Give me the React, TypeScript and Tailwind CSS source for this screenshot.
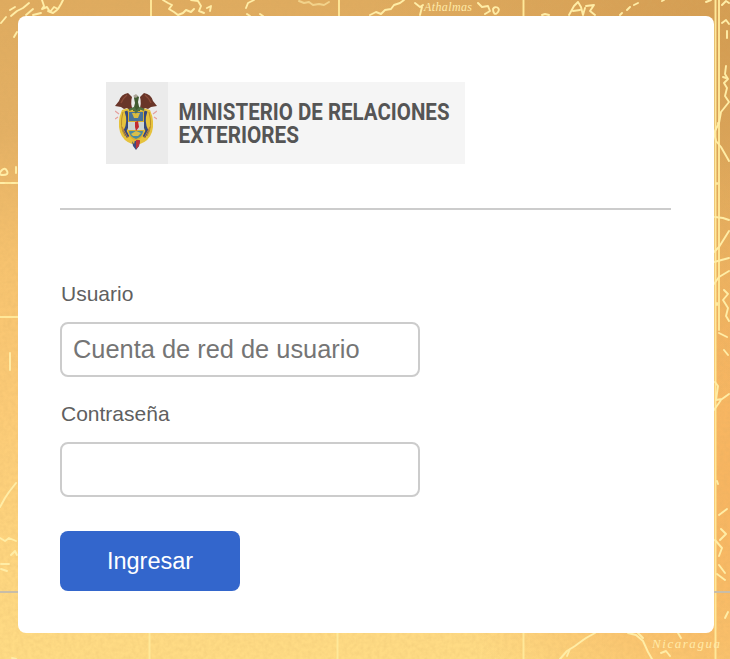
import React from 'react';

const MapBackground = () => (
  <svg className="absolute inset-0 h-full w-full" viewBox="0 0 730 659" fill="none" aria-hidden="true">
    <defs>
      <linearGradient id="paper" x1="0" y1="0" x2="0" y2="1">
        <stop offset="0" stopColor="#dfab5f" />
        <stop offset="0.2" stopColor="#e4b064" />
        <stop offset="0.4" stopColor="#f7c36f" />
        <stop offset="0.62" stopColor="#fccb77" />
        <stop offset="1" stopColor="#ffdc85" />
      </linearGradient>
      <radialGradient id="shade" gradientUnits="userSpaceOnUse" cx="760" cy="480" r="330">
        <stop offset="0" stopColor="#f6b05c" stopOpacity="0.9" />
        <stop offset="0.5" stopColor="#f6b05c" stopOpacity="0.65" />
        <stop offset="1" stopColor="#f6b05c" stopOpacity="0" />
      </radialGradient>
      <radialGradient id="shadeTop" gradientUnits="userSpaceOnUse" cx="730" cy="40" r="360">
        <stop offset="0" stopColor="#cf964c" stopOpacity="0.7" />
        <stop offset="1" stopColor="#cf964c" stopOpacity="0" />
      </radialGradient>
      <filter id="grain" x="0" y="0" width="100%" height="100%">
        <feTurbulence type="fractalNoise" baseFrequency="0.25" numOctaves="3" seed="4" />
        <feColorMatrix values="0 0 0 0 0.65  0 0 0 0 0.4  0 0 0 0 0.12  0.7 0 0 0 -0.22" />
      </filter>
      <filter id="ink" filterUnits="userSpaceOnUse" x="0" y="0" width="730" height="659">
        <feGaussianBlur stdDeviation="0.6" />
      </filter>
    </defs>
    <rect width="730" height="659" fill="url(#paper)" />
    <rect width="730" height="659" fill="url(#shade)" />
    <rect width="730" height="659" fill="url(#shadeTop)" />
    <rect width="730" height="659" filter="url(#grain)" opacity="0.45" />

    <g stroke="#ffeda6" strokeWidth="1.9" strokeLinecap="round" strokeLinejoin="round" filter="url(#ink)">
      {/* Meridians and parallels */}
      <path d="M151 0V17M339 0V17M523.500 0V17M715.500 0V659M719 0V330M149.500 633V659M337.500 633V659M523.500 633V659M0 183H18M0 317H18" stroke="#ffe899" />
      {/* Top coastline */}
      <path d="M1 23l5-6M10 10l5-3M11 16l6-5 6-3 6-5M14 37l3-5M26 15l7-6M33 15l8-2" />
      <path d="M42 0l2 6-2 3 5-2 3 5 4-5 4 2 3-5 2-4M48 11l5 2 4-3" />
      <path d="M163 0l5 3 4 2-3 4 5 3 4 3 5-2 3-3 5 2 3-3M191 0l7 1 3 5-2 5 5 2M207 8l4-2-1 5M246 8l2-5 6-3M247 14l3 2M260 14l3 2" />
      <path d="M299 1l5 2 5-1 4 3 6-1 5 1 5-3" strokeOpacity="0.6" />
      <path d="M370 15l6-3 5 2 4-4 6-1 3-4 6-2 4-3M415 3l5 4 3-2M420 15l2-8M478 3l4 4 6-1 2 5-5 3M493 9c2-4 8-1 5 3s-5 1-5-3" />
      <path d="M569 15l5-9 4-4 3 5 2 8 2-7M573 11l7-1M586 6l8-1-4 6 5 4M542 15l3-1 4 1M620 15l2-2M627 10l3-3M634 5l4-2M662 1l2-1M706 2l5-2" />
      <path d="M722 5l4-4 3 2M722 23l4-3 3 4M727 31v7" />
      {/* Left margin */}
      <path d="M2 170q3-3 5 1t-4 4-1-5M16 167v6M1 183h3M12 183h3M10 353v17M0 507l5-9 4-6 7-9M0 538l5 3 4-3 7 3M11 555l4-4 2 4M1 564h8M1 569l6 2" />
      {/* Right margin */}
      <path d="M726 66l-1 8 3 5-4 4 3 5-2 8 4 6-8 10-2 11-5 10 2 8 5 6 8 14M723 77l3 1M718 123v1M717 183v1M715 217l8 1 6 2M729 231l-10 16-5 5M714 262l15-4M714 284l5-7 10-6M724 290l4 4-5 6 5 8-2 8 3 5M717 303v2" />
      <path d="M719 333l8 4M728 355l-4-5M715 382l3 4-2 14 6-1 7-5M714 410l7-10M717 481l1 3M719 515l8-6M721 529l5 5-6 6M715 540l7 8-3 8M719 565l6 8M717 574l8 6M725 618l3-6" />
      {/* Bottom coastline */}
      <path d="M560 659l7-8 8-5 4-3 7-5 9-5M567 656l3-7M628 633l8 2 7 6 5 11 4 7M638 633l5 5M661 653l5-2 4 5M678 633l3 5M12 658l4 1" />
    </g>
    <g fill="#ffeaa8" fontFamily="Liberation Serif, serif" fontStyle="italic">
      <text x="424" y="11" fontSize="12" textLength="48">Athalmas</text>
      <text x="652" y="648" fontSize="13" textLength="68">Nicaragua</text>
    </g>
    <path d="M0 592H730" stroke="#c8bda8" strokeWidth="2" />
  </svg>
);

const CoatOfArms = () => (
  <svg className="h-[60px] w-[42px]" viewBox="0 0 42 60" fill="none" aria-hidden="true">
    {/* Ribbons and flags around the shield */}
    <path d="M4 23l-4-3M3 26l-3 2M38 23l4-3M39 26l3 2" stroke="#e5a09c" strokeWidth="1.2" />
    <path d="M7 19Q2 30 5 41q3 9 12 12h8q9-3 12-12 3-11-2-22l-7-2H14z" fill="#e6c23c" />
    <path d="M8 21q-4 15 2 24M34 21q4 15-2 24" stroke="#b98f2b" strokeWidth="1" />
    <path d="M11 20q4 11-1 20l3 6M31 20q-4 11 1 20l-3 6" stroke="#34477e" strokeWidth="3" />
    <path d="M7 36l6 11M35 36l-6 11" stroke="#c07a35" strokeWidth="1" />
    {/* Shield */}
    <path d="M13 20h16v19q0 8-8 11-8-3-8-11z" fill="#d9af31" />
    <path d="M14 21h14v9H14z" fill="#4a7399" />
    <path d="M13 31h16v8H13z" fill="#ccd3d2" />
    <path d="M14 40h14q0 5-7 8-7-3-7-8z" fill="#4b8aa0" />
    <path d="M17 22h8l-2 5h-4z" fill="#d9bb41" />
    <path d="M20 31l3-1 1 6-3 4-1-4z" fill="#c22a30" />
    <path d="M16 43l5-3 5 2-3 3h-5z" fill="#d9bf4a" />
    {/* Condor */}
    <path d="M18 19Q15 13 17 6l-4-4Q6 3 4 10l-4 5 6 1 3 2 3-1 3 2 3-1z" fill="#693528" />
    <path d="M24 19q3-6 1-13l4-4q7 1 9 8l4 5-6 1-3 2-3-1-3 2-3-1z" fill="#693528" />
    <path d="M12 4q-4 3-6 8M30 4q4 3 6 8" stroke="#8a4a38" strokeWidth="1.500" />
    <path d="M19 7l2-3 3 2-1 5 2 9h-7l2-8z" fill="#415b31" />
    <path d="M18 5l3-2 2 2-2 2z" fill="#aaa497" />
    <path d="M14 19l5-2 2 4 4-4 4 2" stroke="#507246" strokeWidth="2" />
    {/* Lower tassel */}
    <path d="M17 50h8l-1 5-3 4-3-4z" fill="#3d4b80" />
    <path d="M21 49h4l-1 6-3 3z" fill="#ba353a" />
    <path d="M16 49h4l-1 4z" fill="#e2bb35" />
  </svg>
);

const Logo = () => (
  <div className="ml-[46px] flex h-[82px] w-[359px] bg-[#f5f5f5]">
    <div className="flex w-[62px] justify-center bg-[#ebebeb] pt-[9px] pr-[2px]">
      <CoatOfArms />
    </div>
    <svg className="h-[82px] w-[297px] overflow-visible" viewBox="0 0 297 82" role="img">
      <g fill="#555555" fontFamily="Roboto, Liberation Sans, sans-serif" fontWeight="700" fontSize="23.5">
        <text x="10.500" y="38" textLength="271" lengthAdjust="spacingAndGlyphs">MINISTERIO DE RELACIONES</text>
        <text x="10.500" y="61" textLength="120.500" lengthAdjust="spacingAndGlyphs">EXTERIORES</text>
      </g>
    </svg>
  </div>
);

interface FieldProps {
  id: string;
  label: string;
  type: string;
  placeholder?: string;
}

const Field: React.FC<FieldProps> = ({ id, label, type, placeholder }) => (
  <div className="flex flex-col">
    <label htmlFor={id} className="h-[40px] pl-px text-[21px] leading-[24px] text-[#606060]">
      {label}
    </label>
    <input
      id={id}
      type={type}
      placeholder={placeholder}
      className="h-[55px] w-[360px] rounded-lg border-2 border-[#cccccc] bg-white px-[11px] pb-px text-[25.4px] text-[#555555] outline-none placeholder:text-[#757575]"
    />
  </div>
);

export default function App() {
  return (
    <div className="relative h-[659px] w-[730px] overflow-hidden bg-[#f4c36e] font-['Liberation_Sans',Arial,sans-serif]">
      <MapBackground />
      <main className="relative ml-[18px] pt-4">
        <div className="flex h-[617px] w-[696px] flex-col rounded-lg bg-white px-[42px] pt-[66px]">
          <Logo />
          <hr className="mt-[44px] w-[611px] border-t-2 border-[#cccccc]" />
          <form className="mt-[72px] flex flex-col" onSubmit={(e) => e.preventDefault()}>
            <div className="flex flex-col gap-[25px]">
              <Field id="usuario" label="Usuario" type="text" placeholder="Cuenta de red de usuario" />
              <Field id="clave" label="Contraseña" type="password" />
            </div>
            <button
              type="submit"
              className="mt-[34px] h-[60px] w-[180px] rounded-lg bg-[#3366cc] pt-px text-[23.5px] text-white"
            >
              Ingresar
            </button>
          </form>
        </div>
      </main>
    </div>
  );
}
